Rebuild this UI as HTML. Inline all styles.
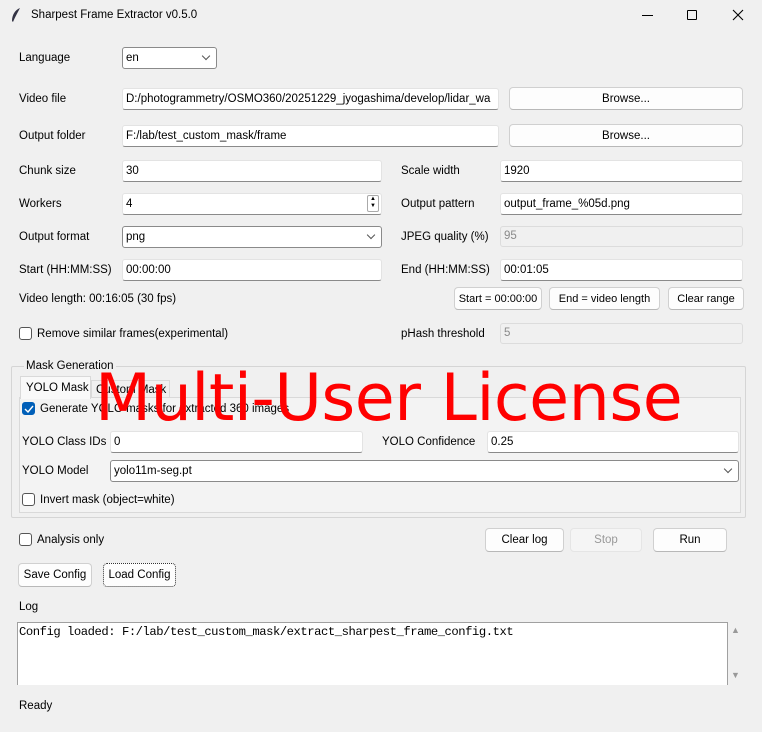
<!DOCTYPE html>
<html><head><meta charset="utf-8"><style>
*{box-sizing:border-box;margin:0;padding:0}
body{width:762px;height:732px;background:#f0f0f0;font-family:"Liberation Sans",sans-serif;font-size:11.5px;color:#000;position:relative;overflow:hidden}
.a{position:absolute;white-space:nowrap}
.l{line-height:14px}
.e{position:absolute;background:#fff;border:1px solid #e3e3e3;border-bottom:1px solid #8a8a8a;border-radius:3px;padding-left:3px;line-height:20px;white-space:nowrap;overflow:hidden}
.d{background:#f0f0f0;border:1px solid #dcdcdc;color:#8a8a8a}
.b{position:absolute;background:#fdfdfd;border:1px solid #d0d0d0;border-bottom-color:#b8b8b8;border-radius:4px;text-align:center;line-height:22px;white-space:nowrap}
.cb{position:absolute;width:13px;height:13px;border:1px solid #555;border-radius:3px;background:#fff}
.chev{position:absolute;right:7px;top:5px;width:6px;height:6px;border-right:1px solid #555;border-bottom:1px solid #555;transform:rotate(45deg)}
</style></head><body>
<svg class="a" style="left:10px;top:7px" width="12" height="16" viewBox="0 0 12 16"><path d="M10 1 C5 3 2 8 2 14 L3 15 C5 10 8 5 10 1Z" fill="#334" /></svg>
<div class="a l" style="left:31px;top:8px">Sharpest Frame Extractor v0.5.0</div>
<div class="a" style="left:642px;top:15px;width:11px;height:1px;background:#000"></div>
<div class="a" style="left:687px;top:10px;width:10px;height:10px;border:1px solid #000;border-radius:1px"></div>
<svg class="a" style="left:732px;top:9px" width="12" height="12"><path d="M1 1L11 11M11 1L1 11" stroke="#000" stroke-width="1.1"/></svg>

<div class="a l" style="left:19px;top:51px">Language</div>
<div class="e" style="left:122px;top:47px;width:95px;height:22px;border-color:#8a8a8a">en<div class="chev"></div></div>

<div class="a l" style="left:19px;top:92px">Video file</div>
<div class="e" style="left:122px;top:88px;width:377px;height:22px">D:/photogrammetry/OSMO360/20251229_jyogashima/develop/lidar_wa</div>
<div class="b" style="left:509px;top:87px;width:234px;height:23px">Browse...</div>

<div class="a l" style="left:19px;top:129px">Output folder</div>
<div class="e" style="left:122px;top:125px;width:377px;height:22px">F:/lab/test_custom_mask/frame</div>
<div class="b" style="left:509px;top:124px;width:234px;height:23px">Browse...</div>

<div class="a l" style="left:19px;top:164px">Chunk size</div>
<div class="e" style="left:122px;top:160px;width:260px;height:22px">30</div>
<div class="a l" style="left:401px;top:164px">Scale width</div>
<div class="e" style="left:500px;top:160px;width:243px;height:22px">1920</div>

<div class="a l" style="left:19px;top:197px">Workers</div>
<div class="e" style="left:122px;top:193px;width:260px;height:22px">4
<div class="a" style="right:2px;top:1px;width:12px;height:17px;border:1px solid #aaa;border-radius:2px;font-size:6px;line-height:7px;text-align:center">▲<br>▼</div></div>
<div class="a l" style="left:401px;top:197px">Output pattern</div>
<div class="e" style="left:500px;top:193px;width:243px;height:22px">output_frame_%05d.png</div>

<div class="a l" style="left:19px;top:230px">Output format</div>
<div class="e" style="left:122px;top:226px;width:260px;height:22px;border-color:#8a8a8a">png<div class="chev"></div></div>
<div class="a l" style="left:401px;top:230px">JPEG quality (%)</div>
<div class="e d" style="left:500px;top:226px;width:243px;height:21px;line-height:19px">95</div>

<div class="a l" style="left:19px;top:263px">Start (HH:MM:SS)</div>
<div class="e" style="left:122px;top:259px;width:260px;height:22px">00:00:00</div>
<div class="a l" style="left:401px;top:263px">End (HH:MM:SS)</div>
<div class="e" style="left:500px;top:259px;width:243px;height:22px">00:01:05</div>

<div class="a l" style="left:19px;top:292px">Video length: 00:16:05 (30 fps)</div>
<div class="b" style="left:454px;top:287px;width:88px;height:23px;font-size:11px">Start = 00:00:00</div>
<div class="b" style="left:549px;top:287px;width:111px;height:23px;font-size:11px">End = video length</div>
<div class="b" style="left:668px;top:287px;width:76px;height:23px;font-size:11px">Clear range</div>

<div class="cb" style="left:19px;top:327px"></div>
<div class="a l" style="left:37px;top:327px">Remove similar frames(experimental)</div>
<div class="a l" style="left:401px;top:327px">pHash threshold</div>
<div class="e d" style="left:500px;top:323px;width:243px;height:21px;line-height:19px">5</div>

<div class="a" style="left:11px;top:366px;width:735px;height:152px;border:1px solid #d5d5d5;border-radius:2px"></div>
<div class="a l" style="left:24px;top:359px;background:#f0f0f0;padding:0 2px">Mask Generation</div>
<div class="a" style="left:19px;top:397px;width:722px;height:116px;border:1px solid #d9d9d9;background:#f3f3f3"></div>
<div class="a l" style="left:20px;top:376px;width:71px;height:23px;background:#f9f9f9;border:1px solid #d9d9d9;border-bottom:none;padding:4px 0 0 5px">YOLO Mask</div>
<div class="a l" style="left:91px;top:380px;width:79px;height:18px;border:1px solid #d9d9d9;border-bottom:none;padding:2px 0 0 4px">Custom Mask</div>
<div class="cb" style="left:22px;top:402px;background:#005fb8;border-color:#005fb8"></div>
<svg class="a" style="left:24px;top:405px" width="10" height="8"><path d="M1 4L4 7L9 1" stroke="#fff" stroke-width="1.4" fill="none"/></svg>
<div class="a l" style="left:40px;top:402px">Generate YOLO masks for extracted 360 images</div>

<div class="a l" style="left:22px;top:435px">YOLO Class IDs</div>
<div class="e" style="left:110px;top:431px;width:253px;height:22px">0</div>
<div class="a l" style="left:382px;top:435px">YOLO Confidence</div>
<div class="e" style="left:487px;top:431px;width:252px;height:22px">0.25</div>

<div class="a l" style="left:22px;top:464px">YOLO Model</div>
<div class="e" style="left:110px;top:460px;width:629px;height:22px;border-color:#8a8a8a">yolo11m-seg.pt<div class="chev"></div></div>

<div class="cb" style="left:22px;top:493px"></div>
<div class="a l" style="left:40px;top:493px">Invert mask (object=white)</div>

<div class="cb" style="left:19px;top:533px"></div>
<div class="a l" style="left:37px;top:533px">Analysis only</div>
<div class="b" style="left:485px;top:528px;width:79px;height:24px">Clear log</div>
<div class="b" style="left:570px;top:528px;width:72px;height:24px;background:#f5f5f5;border-color:#e5e5e5;color:#999">Stop</div>
<div class="b" style="left:653px;top:528px;width:74px;height:24px">Run</div>

<div class="b" style="left:18px;top:563px;width:74px;height:24px">Save Config</div>
<div class="b" style="left:103px;top:563px;width:73px;height:24px;border:1px dotted #333">Load Config</div>

<div class="a l" style="left:19px;top:600px">Log</div>
<div class="a" style="left:17px;top:622px;width:711px;height:63px;background:#fff;border:1px solid #a0a0a0;border-bottom:none;font-family:'Liberation Mono',monospace;font-size:12.2px;padding:2px 0 0 1px;letter-spacing:-0.45px">Config loaded: F:/lab/test_custom_mask/extract_sharpest_frame_config.txt</div>
<div class="a" style="left:731px;top:625px;font-size:9px;color:#999">▲</div>
<div class="a" style="left:731px;top:670px;font-size:9px;color:#999">▼</div>

<div class="a l" style="left:19px;top:699px">Ready</div>

<div class="a" style="left:95px;top:361px;font-size:65px;line-height:76px;color:#ff0000;font-family:'DejaVu Sans',sans-serif;letter-spacing:-0.5px">Multi-User License</div>
</body></html>
